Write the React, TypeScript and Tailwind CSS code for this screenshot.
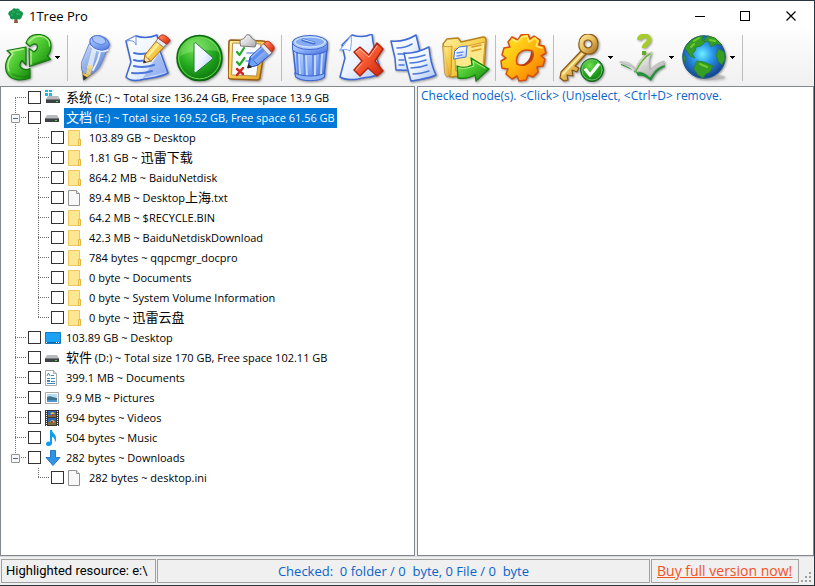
import React, { useState } from "react";

type NodeIcon = "system" | "drive" | "folder" | "file" | "desktop" | "documents" | "pictures" | "videos" | "music" | "downloads";

interface TreeNode {
  id: string;
  icon: NodeIcon;
  name: string;
  children?: TreeNode[];
}

const nodes: TreeNode[] = [
  { id: "c", icon: "system", name: "系统 (C:) ~ Total size 136.24 GB, Free space 13.9 GB" },
  {
    id: "e",
    icon: "drive",
    name: "文档 (E:) ~ Total size 169.52 GB, Free space 61.56 GB",
    children: [
      { id: "e1", icon: "folder", name: "103.89 GB ~ Desktop" },
      { id: "e2", icon: "folder", name: "1.81 GB ~ 迅雷下载" },
      { id: "e3", icon: "folder", name: "864.2 MB ~ BaiduNetdisk" },
      { id: "e4", icon: "file", name: "89.4 MB ~ Desktop上海.txt" },
      { id: "e5", icon: "folder", name: "64.2 MB ~ $RECYCLE.BIN" },
      { id: "e6", icon: "folder", name: "42.3 MB ~ BaiduNetdiskDownload" },
      { id: "e7", icon: "folder", name: "784 bytes ~ qqpcmgr_docpro" },
      { id: "e8", icon: "folder", name: "0 byte ~ Documents" },
      { id: "e9", icon: "folder", name: "0 byte ~ System Volume Information" },
      { id: "e10", icon: "folder", name: "0 byte ~ 迅雷云盘" },
    ],
  },
  { id: "desktop", icon: "desktop", name: "103.89 GB ~ Desktop" },
  { id: "d", icon: "drive", name: "软件 (D:) ~ Total size 170 GB, Free space 102.11 GB" },
  { id: "documents", icon: "documents", name: "399.1 MB ~ Documents" },
  { id: "pictures", icon: "pictures", name: "9.9 MB ~ Pictures" },
  { id: "videos", icon: "videos", name: "694 bytes ~ Videos" },
  { id: "music", icon: "music", name: "504 bytes ~ Music" },
  {
    id: "downloads",
    icon: "downloads",
    name: "282 bytes ~ Downloads",
    children: [{ id: "dl1", icon: "file", name: "282 bytes ~ desktop.ini" }],
  },
];

function Gradients() {
  const stops: [string, string, string, string][] = [
    ["green", "#8eea62", "#46c32c", "#14830f"],
    ["blue", "#d5e5ff", "#88aef5", "#4468dc"],
    ["paper", "#ffffff", "#edf4ff", "#a9c3f8"],
    ["gold", "#fff3a0", "#f8cf4e", "#e29a18"],
    ["red", "#ff9a78", "#f4552d", "#c8230b"],
    ["gear", "#fff22c", "#ffb60c", "#f56a00"],
    ["key", "#ffefad", "#e8bd57", "#9b6420"],
    ["silver", "#ffffff", "#dadada", "#a6a6a6"],
  ];
  return (
    <svg className="absolute h-0 w-0" aria-hidden="true">
      <defs>
        {stops.map(([id, a, b, c]) => (
          <linearGradient key={id} id={id} x1="0" y1="0" x2="1" y2="1">
            <stop offset="0" stopColor={a} />
            <stop offset=".5" stopColor={b} />
            <stop offset="1" stopColor={c} />
          </linearGradient>
        ))}
        <radialGradient id="ball" cx=".4" cy=".3" r=".75">
          <stop offset="0" stopColor="#6fdf50" />
          <stop offset=".55" stopColor="#22a81d" />
          <stop offset="1" stopColor="#0a700c" />
        </radialGradient>
        <radialGradient id="sea" cx=".46" cy=".43" r=".58">
          <stop offset="0" stopColor="#6df0ff" />
          <stop offset=".4" stopColor="#2b9aec" />
          <stop offset="1" stopColor="#123f8c" />
        </radialGradient>
      </defs>
    </svg>
  );
}

function Glyph({ children }: { children: React.ReactNode }) {
  return (
    <svg
      viewBox="0 0 48 48"
      className="h-12 w-12 drop-shadow-[1px_1px_1px_rgba(0,0,0,0.4)]"
      strokeLinejoin="round"
      strokeLinecap="round"
      fill="none"
      aria-hidden="true"
    >
      {children}
    </svg>
  );
}

const RefreshGlyph = () => (
  <Glyph>
    <g fill="url(#green)" stroke="#15780f" strokeWidth="1.2">
      <path d="M21 13 2 16.500 6 20C1 25-1 33 2 39c4 8 15 8 23 5V34.500c-4 2-7 1-9-1-2-2.500-1-5 1-7L21 31z" />
      <path d="M21 9C23 3 28 .5 33 .5 41 .5 46 5 46 12c0 4-1 7-3.500 10l3 3.500L24.500 32.500 24 14.500l5 3.500c3-2 4-5 3-7-2-2-5-1-7 1.500z" />
    </g>
    <g stroke="#c6f8a4" strokeWidth="1.300" opacity=".85">
      <path d="M18.500 15 5.500 17.500 8 20C3 26 2 32 4 37" />
      <path d="M24 8C28 3 33 1.500 37 2.500c5 1.500 8 4.500 7.500 9.500M26 17.500V30" />
    </g>
    <path d="M7 40c5 3 11 3.500 17 2M28 30l13-4" stroke="#0c6c0c" strokeWidth="1.500" opacity=".4" />
  </Glyph>
);

const PencilGlyph = () => (
  <Glyph>
    <path d="m10 33 1.500 13L21 39z" fill="#f6c84b" stroke="#7d7460" />
    <path d="m11 41 .5 5.500 4-3z" fill="#333" />
    <path d="M9.500 28.500 17 10h18.500c0 6-3.500 14-6.500 20-2 4.500-5 8-9 9.500-6 2-10-1-10.500-5z" fill="url(#blue)" stroke="#5c80d6" opacity=".85" />
    <path d="m20 15 5-1-5 21-5-1z" fill="#fff" opacity=".65" />
    <path d="m16 31 5 1-3 9-4-1z" fill="#ffd768" opacity=".8" />
    <path d="M28 15c0 7-3 14-7 21" stroke="#eef4ff" strokeWidth="1.800" />
    <ellipse cx="27.500" cy="9" rx="10" ry="7" transform="rotate(20 27.500 9)" fill="url(#blue)" stroke="#4a70d0" />
    <ellipse cx="27" cy="6" rx="7" ry="4" transform="rotate(18 27 6)" fill="#aac6fa" stroke="#5f86df" />
    <path d="M18 12c5 5 12 7 18 4" stroke="#e3edff" strokeWidth="1.500" />
  </Glyph>
);

const EditGlyph = () => (
  <Glyph>
    <path d="M2 7 12 2c6 2 14 2 21-1l3 16 8 22c-9 5-19 5-28 7-6 1-11 0-14-3l5-15z" fill="url(#paper)" stroke="#3e68d6" strokeWidth="1.500" />
    <path d="M2 7c6-1 9 0 10 4L12 2z" fill="#fff" stroke="#6c91e6" />
    <path d="m19 44 24-6-8-19z" fill="#7193e8" opacity=".5" />
    <path d="M10 19c7 2 12 1 17-1M10 26c6 2 10 1 15-1M10 32c8 2 14 1 20-1M8 39c8 1 14 0 20-2" stroke="#4b75d8" strokeWidth="2" />
    <path d="m21 21-1.500 8L27 27z" fill="#ffe4ae" stroke="#935d15" />
    <path d="m20 26-.5 3 3-.8z" fill="#222" />
    <path d="m21 21 12-15 8 6-14 15z" fill="url(#gold)" stroke="#b46a10" />
    <path d="m23.500 22.500 12-14" stroke="#fff1a2" strokeWidth="2" />
    <path d="m32 7 2.500-3 8 6-2.500 3z" fill="#e7e7ee" stroke="#888" />
    <path d="M34.500 4C37 0 39 0 43 3s4 4 0 7z" fill="url(#red)" stroke="#b52a18" />
  </Glyph>
);

const PlayGlyph = () => (
  <Glyph>
    <circle cx="23.500" cy="24" r="22.500" fill="url(#ball)" stroke="#0b680d" strokeWidth="1.500" />
    <circle cx="23.500" cy="24" r="20.800" stroke="#6edb55" strokeWidth="1" />
    <path d="M4 22C5 8 18 2 28 4c9 1 14 8 15 14-10-3-24-3-39 4z" fill="#b8ffa0" opacity=".3" />
    <path d="M18 10c0-1.500 1.500-1.500 2.500-.5L36 23c1 1 1 1.500 0 2.500L20.500 38c-1 1-2.500.5-2.500-1z" fill="url(#paper)" stroke="#1c7c36" />
  </Glyph>
);

const ChecklistGlyph = () => (
  <Glyph>
    <path d="M3 6 35 7c2 0 3 1 2.500 3L32 43c0 2-1 3-3 3L3 45c-2 0-3-1-3-3L1 8c0-1 1-2 2-2z" fill="url(#gold)" stroke="#9a5c17" strokeWidth="1.500" />
    <path d="m5 9 28 1-4.500 32L4 41z" fill="#fafcff" stroke="#b79055" />
    <path d="M12 8c0-4 4-2 5-5s5-3 6 0 6 2 5 7l-1 3-14-1z" fill="url(#silver)" stroke="#777" />
    <path d="m9 18 2.500 3L16 14M9 28l2.500 3 5-7" stroke="#28a929" strokeWidth="2.200" />
    <path d="m9 35 6 5m0-6-6 7" stroke="#c92b20" strokeWidth="2.500" />
    <path d="M19 19h9M18 27h5" stroke="#779fea" strokeWidth="1.500" />
    <path d="m20 33 2-10 14-13 8 9-14 12z" fill="url(#blue)" stroke="#2754c7" />
    <path d="m23 24 7 7-9 2.500z" fill="#70a2fc" stroke="#3462c3" />
    <path d="m20.500 31-.8 3 3.500-1z" fill="#222" stroke="#222" />
    <path d="m25 25 12-11" stroke="#5b8df0" strokeWidth="3.500" />
    <path d="m33 12 3-2.500 8 9-3 2.500z" fill="#e7e7ee" stroke="#999" />
    <path d="m36 9.500 2-1.800c2-1 3-.5 5.500 2s3.500 4.300 2 6.300L44 18z" fill="url(#red)" stroke="#b52a18" />
  </Glyph>
);

const TrashGlyph = () => (
  <Glyph>
    <path d="M7 14h34l-3 29c-5 4-23 4-28 0z" fill="url(#blue)" stroke="#3c62cc" strokeWidth="1.500" />
    <path d="m12 19 1 22M19 21l1 23M28 21v23M35 19l-1 22" stroke="#5f88e8" strokeWidth="4" />
    <path d="m13 20 1 20M20 22l1 21M29 22v21M36 20l-1 20" stroke="#c3daff" strokeWidth="2" />
    <path d="M9 39c6 4 24 4 30 0l-.7 4c-5 5-23 5-28.500 0z" fill="#8fb3f8" stroke="#3c62cc" />
    <path d="M6.500 8v8c5 6 30 6 35 0V8z" fill="url(#blue)" stroke="#4068d0" />
    <ellipse cx="24" cy="8.500" rx="17.500" ry="7" fill="#a8c7fb" stroke="#4068d0" />
    <ellipse cx="24" cy="8" rx="15" ry="5" fill="#86acf4" stroke="#dceaff" />
    <path d="m17 6 11 3" stroke="#426fd3" strokeWidth="3" />
    <path d="m17 5.500 11 3" stroke="#c9ddff" strokeWidth="1" />
  </Glyph>
);

const DeleteGlyph = () => (
  <Glyph>
    <path d="M4 11 14 1c6 2 14 2 20-1 1 12 4 23 8 34 1 3 1 5-1 6-7 4-14 3-21 5-7 1-13 1-18-2l5-19z" fill="url(#paper)" stroke="#3f6ad4" strokeWidth="1.500" />
    <path d="M2 16 13 2c1 5 0 10-1 15-3-2-6-2-10-1z" fill="#fff" stroke="#7ea3eb" />
    <path d="m16 18 6-5 9 8 8-12 6 6-8 12 8 10-6 5-9-8-8 8-6-6 8-9z" fill="url(#red)" stroke="#b4260f" strokeWidth="1.500" />
    <path d="m18 18 4-3 9 8 8-11M18 36l6-7" stroke="#ffb59c" strokeWidth="1" />
  </Glyph>
);

const CopyGlyph = () => (
  <Glyph>
    <path d="M1 7c9 1 17-1 25-6l7 29c-7 5-14 7-22 6H6L5 24z" fill="url(#paper)" stroke="#3f6ad4" strokeWidth="1.500" />
    <path d="M7 14c6 0 10-1 15-4M8 20h6M9 26h5M9 31h5" stroke="#4c78d8" strokeWidth="1.500" />
    <path d="M14 19c9 1 17-2 25-6 1 12 3 20 7 28-8 4-15 4-25 6-2-7-5-18-7-28z" fill="url(#paper)" stroke="#3f6ad4" strokeWidth="1.500" />
    <path d="M19 24c6 0 10-1 16-3M20 29c6 0 10-1 16-3M21 34c6 0 11-1 16-3M23 40c6 0 10-1 16-3" stroke="#4c78d8" strokeWidth="1.500" />
  </Glyph>
);

const MoveGlyph = () => (
  <Glyph>
    <path d="m1 10 4-5 11-1 3 4 22-5c2 0 3 1 3 3l-2 32-32 5c-2 0-3-1-3-3z" fill="url(#gold)" stroke="#b9831c" strokeWidth="1.300" />
    <path d="m13 15 30-7-2 24-27 5z" fill="#ffe88a" stroke="#d59c2c" />
    <path d="m13 17 4-4 8-1-1 11-12 2z" fill="url(#paper)" stroke="#4773d8" />
    <path d="m15 19 6-1m-6 4 5-1" stroke="#6593ee" strokeWidth="1.500" />
    <path d="m30 13 9-2m-9 6 9-2" stroke="#dd9a26" strokeWidth="1.500" />
    <path d="M1 12c3 1 6 1 9 0l-1 29-4 2-2-3z" fill="url(#gold)" stroke="#c1862a" opacity=".8" />
    <path d="M15 32c5 2 10 2 15-1l-1-7 18 11-13 12-1-6c-5 3-11 4-17 3z" fill="url(#green)" stroke="#16800f" strokeWidth="1.300" />
    <path d="M17 34c5 1 10 0 15-2l-1-5 12 7" stroke="#a9ef84" />
  </Glyph>
);

const SettingsGlyph = () => (
  <Glyph>
    <path
      fillRule="evenodd"
      d="m12 3 6 3 3-5 7-1 2 5 4-3 6 4-1 5 5 1 2 7-5 3 4 3-2 7-6 1 1 5-5 5-5-2-2 5-7 1-2-5-5 3-6-5 2-5-6-1-1-7 5-3-4-3 2-7 6-1-2-5zM27 16c-8 0-12 7-10 14 8 4 18-3 16-12-1-2-3-2-6-2z"
      fill="url(#gear)"
      stroke="#d84e06"
      strokeWidth="1.500"
    />
    <path d="M20 31c7-1 11-7 11-14 5 3 0 14-8 15-1 0-2 0-3-1z" fill="#bd3913" />
    <path d="m12 5 5 3 5-5 5-1 2 6 6-4 3 3-2 5 6 2" stroke="#fff58a" strokeWidth="1.500" opacity=".8" />
  </Glyph>
);

const KeyGlyph = () => (
  <Glyph>
    <path d="M24 16 3 38l-1 6 4 3 4-1-1-5 6 1-1-6 5 2 2-4-4-2 12-13z" fill="url(#key)" stroke="#85561b" strokeWidth="1.200" />
    <path d="M5 40 25 19" stroke="#fff0a6" strokeWidth="1.800" />
    <path fillRule="evenodd" d="M30 0c6 0 10 4 10 10 0 7-5 11-10 10-6 0-10-5-9-11 0-5 4-9 9-9zm0 6c-3 0-4 2-4 4s2 4 4 4 4-2 4-4-2-4-4-4z" fill="url(#key)" stroke="#8a5a1b" strokeWidth="1.200" />
    <circle cx="34" cy="36" r="11.500" fill="url(#ball)" stroke="#1f642b" />
    <circle cx="34" cy="36" r="10" stroke="#71bd72" />
    <path d="m28 36 4 5 8-10" stroke="#fff" strokeWidth="3.200" strokeLinecap="square" strokeLinejoin="miter" />
  </Glyph>
);

const HelpGlyph = () => (
  <Glyph>
    <path d="M2 30c6 2 12 5 14 9 3-9 7-15 15-18l1 1c-4 4-3 11-1 17 4-5 8-8 14-9l1 3c-6 2-10 6-14 14-6-5-9-6-13-5l-2-4c-5-3-10-5-15-7z" fill="#249139" />
    <path d="M1 28c8-1 13 3 15 9 3-10 8-16 17-19-4 7-3 13-2 18 4-5 8-7 14-9v4c-7 2-10 6-14 12-5-4-8-6-13-5l-3-5c-4-2-9-4-14-5z" fill="url(#silver)" stroke="#b5b5b5" strokeWidth=".7" />
    <path d="M17 37C21 29 25 23 31 20" stroke="#69b52d" strokeWidth="1.500" />
    <path d="M20 6c1-5 9-6 10-1 1 5-5 4-5 9" stroke="#a6cc28" strokeWidth="4.500" strokeLinecap="butt" />
    <path d="M23 17h4v4h-4z" fill="#65ad20" />
  </Glyph>
);

const GlobeGlyph = () => (
  <Glyph>
    <ellipse cx="30" cy="43" rx="15" ry="3" fill="#aaa" opacity=".5" />
    <circle cx="24" cy="23" r="21.300" fill="url(#sea)" stroke="#255d92" />
    <g fill="#379e25" stroke="#267b27" strokeWidth=".7">
      <path d="M5 14C9 6 17 2 23 2l-1 4 3 2-4 4-5 1-1 4-3 3 3 4-5-2-3-5z" />
      <path d="m28 2 7 2 7 7-6-1-5 3-2-5-5-1z" />
      <path d="m39 15 5 3 1 7-3 6-4-4-2-6z" />
      <path d="m17 27 7 1 9 4-3 6-4 2-3 4-5-3-4-6z" />
      <path d="m3 21 3 3-1 5z" />
    </g>
    <path d="m14 7 5-3m-8 9 3-3m16-4 5 1m-15 23 7 3" stroke="#83d832" strokeWidth="2" opacity=".75" />
  </Glyph>
);

function ToolButton({ label, menu, children }: { label: string; menu?: boolean; children: React.ReactNode }) {
  return (
    <div className="flex shrink-0 items-center">
      <button type="button" aria-label={label} title={label} className="px-0.5 hover:bg-[#d8e6f2]">
        {children}
      </button>
      {menu && (
        <button type="button" aria-label={`${label} options`} className="flex h-12 w-[9px] items-center hover:bg-[#d8e6f2]">
          <svg viewBox="0 0 5 3" className="h-[3px] w-[5px]" shapeRendering="crispEdges" aria-hidden="true">
            <path d="M0 0h5v1H4v1H3v1H2V2H1V1H0z" />
          </svg>
        </button>
      )}
    </div>
  );
}

const Separator = () => (
  <div className="flex h-[46px] w-1.5 shrink-0 justify-center">
    <div className="w-px bg-[#bdbdbd]" />
  </div>
);

function FileIcon({ icon }: { icon: NodeIcon }) {
  return (
    <svg viewBox="0 0 16 16" className="h-4 w-4 shrink-0" aria-hidden="true">
      {icon === "system" && <path d="M0 0h3v2H0zM4 0h3v2H4zM0 3h3v3H0zM4 3h3v3H4z" fill="#19b9ed" />}
      {(icon === "system" || icon === "drive") && (
        <g transform={icon === "system" ? "translate(0 1)" : "translate(-1 0)"}>
          <path d="M3 5h10l2 3H1z" fill="#b8bbbd" />
          <path d="M1 8h14v4H1z" fill="#3d4144" />
          <path d="M1 8h14v1H1z" fill="#777b7e" />
          <path d="M11 10h2v1h-2z" fill="#40dd55" />
        </g>
      )}
      {icon === "folder" && (
        <>
          <path d="M.5.5h11v9h1v6H.5z" fill="#ffe693" stroke="#eec858" />
          <path d="M10.500 9.500h2v6h-2z" fill="#ffe693" stroke="#e3b744" />
        </>
      )}
      {icon === "file" && (
        <>
          <path d="M.5.5h8l3 3v12H.5z" fill="#f8f8f8" stroke="#929292" />
          <path d="M8.500.5v3h3" fill="#e4e4e4" stroke="#929292" />
        </>
      )}
      {icon === "desktop" && (
        <>
          <path d="M.5 2.500h15v11H.5z" fill="#1ca1f4" stroke="#147bc2" />
          <path d="M1 12h14v1H1z" fill="#0767a7" />
          <path d="M1 12h1v1H1zM11 12h1v1h-1zM13 12h1v1h-1z" fill="#fff" />
        </>
      )}
      {icon === "documents" && (
        <>
          <path d="M.5.5h8l3 3v12H.5z" fill="#fff" stroke="#aaa" />
          <path d="M8.500.5v3h3" fill="#ddd" stroke="#aaa" />
          <path d="m2 6 1.500-3L5 6M6 5.500h3M6 8.500h4M2 13.500h8M6 11.500h4" fill="none" stroke="#3c89bd" />
          <path d="M2 8h3v1H2zM2 10h3v2H2z" fill="#3c89bd" />
        </>
      )}
      {icon === "pictures" && (
        <>
          <path d="M.5 2.500h13v11H.5z" fill="#fff" stroke="#a8a8a8" />
          <path d="M2 4h10v4H2z" fill="#b5dbf7" />
          <path d="M2 7c3-2 5 0 10 1v2H2z" fill="#3d7089" />
          <path d="M2 10h10v2H2z" fill="#4a94cb" />
        </>
      )}
      {icon === "videos" && (
        <>
          <path d="M0 0h14v16H0z" fill="#353535" />
          <path d="M3 1h8v6H3zM3 8h8v7H3z" fill="#2867ba" />
          <path d="M3 5h8v2H3zM3 12h8v3H3z" fill="#7d6d3d" />
          <path d="m5 3 3-1 2 2-3 1zM5 11l3-1 2 2-3 1z" fill="#e5bd3f" />
          <path d="M7 4h2v2H7zM6 11h2v2H6z" fill="#cf3727" />
          <path d="M1.500 1v15M12.500 1v15" fill="none" stroke="#fff" strokeDasharray="1 1" />
        </>
      )}
      {icon === "music" && (
        <path d="M5 0h2c0 3 4 4 4 8 0 2 0 3-1 4 0-3-1-5-3-5v6c0 4-6 4-6 1 0-2 2-3 4-2z" fill="#129ce9" />
      )}
      {icon === "downloads" && <path d="M5.500.5h5v7h4.500L8 15.500 1 7.500h4.500z" fill="#3292e5" stroke="#247bc9" />}
    </svg>
  );
}

// One 23px wide cell of the dotted connector lines left of a node
function Guide({ up, down, across, children }: { up?: boolean; down?: boolean; across?: boolean; children?: React.ReactNode }) {
  return (
    <div className="grid h-5 w-[23px] shrink-0">
      <svg viewBox="0 0 23 20" className="col-start-1 row-start-1 h-5 w-[23px]" shapeRendering="crispEdges" stroke="#707070" strokeDasharray="1 1" aria-hidden="true">
        {up && <path d="M11.500 0v10" />}
        {down && <path d="M11.500 10v10" />}
        {across && <path d="M11 9.500h12" />}
      </svg>
      {children}
    </div>
  );
}

// Chinese runs are set larger than the Latin text around them
function NodeName({ name }: { name: string }) {
  return name.split(/([\u4e00-\u9fff]+)/).map((part, i) =>
    i % 2 ? (
      <span key={i} className="text-[13px] leading-none">{part}</span>
    ) : (
      part
    )
  );
}

interface RowProps {
  node: TreeNode;
  level: number;
  first: boolean;
  last: boolean;
  parentContinues?: boolean;
  open: boolean;
  selected: boolean;
  onToggle: () => void;
  onSelect: () => void;
}

function Row({ node, level, first, last, parentContinues, open, selected, onToggle, onSelect }: RowProps) {
  return (
    <div className="flex h-5 items-start whitespace-nowrap">
      {level > 0 && <Guide up={parentContinues} down={parentContinues} />}
      <Guide up={!first} down={!last} across>
        {node.children && (
          <button
            type="button"
            onClick={onToggle}
            aria-label={open ? "Collapse" : "Expand"}
            className="col-start-1 row-start-1 ml-[7px] mt-1.5 flex h-[9px] w-[9px] items-center justify-center rounded-[1px] border border-[#919191] bg-[#f8f8f8]"
          >
            <span className="h-px w-[5px] bg-[#4b63a7]" />
          </button>
        )}
      </Guide>
      <input
        type="checkbox"
        id={`check-${node.id}`}
        aria-labelledby={`name-${node.id}`}
        className="ml-px mt-[3px] h-[13px] w-[13px] shrink-0 appearance-none border border-[#333] bg-white checked:bg-[#0078d7]"
      />
      <span className="ml-1 mr-[3px] mt-0.5">
        <FileIcon icon={node.icon} />
      </span>
      <button
        type="button"
        id={`name-${node.id}`}
        onClick={onSelect}
        className={`h-5 px-0.5 text-left leading-5 ${selected ? "bg-[#0078d7] text-white" : "text-black"}`}
      >
        <NodeName name={node.name} />
      </button>
    </div>
  );
}

function Tree() {
  const [selected, setSelected] = useState("e");
  const [closed, setClosed] = useState<string[]>([]);

  const toggle = (id: string) => {
    setClosed(closed.includes(id) ? closed.filter((c) => c !== id) : [...closed, id]);
  };

  return (
    <div className="w-[415px] shrink-0 overflow-auto border border-[#828790] bg-white pl-[3px] pt-px text-[11px]">
      {nodes.map((node, i) => {
        const last = i === nodes.length - 1;
        const open = !closed.includes(node.id);
        return (
          <React.Fragment key={node.id}>
            <Row
              node={node}
              level={0}
              first={i === 0}
              last={last}
              open={open}
              selected={selected === node.id}
              onToggle={() => toggle(node.id)}
              onSelect={() => setSelected(node.id)}
            />
            {open &&
              node.children?.map((child, j) => (
                <Row
                  key={child.id}
                  node={child}
                  level={1}
                  first={false}
                  last={j === node.children!.length - 1}
                  parentContinues={!last}
                  open={false}
                  selected={selected === child.id}
                  onToggle={() => toggle(child.id)}
                  onSelect={() => setSelected(child.id)}
                />
              ))}
          </React.Fragment>
        );
      })}
    </div>
  );
}

function TitleBar() {
  return (
    <header className="flex h-[30px] shrink-0 items-center bg-white pl-2">
      <svg viewBox="0 0 16 16" className="h-4 w-4" aria-hidden="true">
        <path d="m7 8-1 7h4L9 8z" fill="#8d5a38" />
        <path d="M4 2c1-2 3-2 4-1 2-1 4 0 4 2 3 0 4 3 2 5 0 3-3 4-4 3-1 1-3 1-4 0-2 1-5 0-4-3C-1 7 0 3 4 2z" fill="#14934c" />
        <path d="M4 4h3M9 3h2M3 7h2M8 6h4" stroke="#39bd67" />
      </svg>
      <h1 className="ml-[5px] flex-1 text-[13px] leading-5">1Tree Pro</h1>
      <button type="button" aria-label="Minimize" className="flex h-full w-[45px] items-center justify-center hover:bg-[#e5e5e5]">
        <svg viewBox="0 0 11 11" className="h-[11px] w-[11px]" shapeRendering="crispEdges" stroke="#000"><path d="M0 5.500h10" /></svg>
      </button>
      <button type="button" aria-label="Maximize" className="flex h-full w-[45px] items-center justify-center hover:bg-[#e5e5e5]">
        <svg viewBox="0 0 11 11" className="h-[11px] w-[11px]" shapeRendering="crispEdges" stroke="#000" fill="none"><path d="M.5.5h9v9h-9z" /></svg>
      </button>
      <button type="button" aria-label="Close" className="flex h-full w-[46px] items-center justify-center hover:bg-[#e81123]">
        <svg viewBox="0 0 11 11" className="h-[11px] w-[11px]" stroke="#000" strokeWidth="1.200"><path d="m.5.5 9 9m0-9-9 9" /></svg>
      </button>
    </header>
  );
}

function Toolbar() {
  return (
    <div role="toolbar" className="flex h-[55px] shrink-0 items-center bg-linear-to-b from-[#fdfdfd] to-[#f0f0f0] pb-0.5 pl-[3px]">
      <ToolButton label="Refresh" menu><RefreshGlyph /></ToolButton>
      <Separator />
      <ToolButton label="Highlight"><PencilGlyph /></ToolButton>
      <ToolButton label="Edit"><EditGlyph /></ToolButton>
      <ToolButton label="Run"><PlayGlyph /></ToolButton>
      <ToolButton label="Properties"><ChecklistGlyph /></ToolButton>
      <Separator />
      <ToolButton label="Recycle"><TrashGlyph /></ToolButton>
      <ToolButton label="Delete"><DeleteGlyph /></ToolButton>
      <ToolButton label="Copy"><CopyGlyph /></ToolButton>
      <ToolButton label="Move"><MoveGlyph /></ToolButton>
      <Separator />
      <ToolButton label="Settings"><SettingsGlyph /></ToolButton>
      <Separator />
      <ToolButton label="Register" menu><KeyGlyph /></ToolButton>
      <ToolButton label="Help" menu><HelpGlyph /></ToolButton>
      <ToolButton label="Website" menu><GlobeGlyph /></ToolButton>
      <Separator />
    </div>
  );
}

function StatusBar() {
  return (
    <footer className="flex h-[29px] shrink-0 items-start gap-px border-t border-[#d9d9d9] bg-[#f0f0f0] pl-px pt-0.5 text-[13px]">
      <div className="h-6 w-[155px] border border-[#a0a0a0] px-1 font-['Roboto',sans-serif] leading-[22px] whitespace-nowrap">
        Highlighted resource: e:\
      </div>
      <div className="h-6 flex-1 border border-[#a0a0a0] text-center leading-[22px] whitespace-pre text-[#0a64c8]">
        {"Checked:  0 folder / 0  byte, 0 File / 0  byte"}
      </div>
      <div className="h-6 w-[148px] border border-[#a0a0a0] px-[5px] leading-[22px] whitespace-nowrap">
        <a href="#buy" className="text-[14px] text-[#f4511e] underline">Buy full version now!</a>
      </div>
      <svg viewBox="0 0 11 11" className="mr-[3px] mb-[3px] h-[11px] w-[11px] self-end" fill="#a0a0a0" aria-hidden="true">
        <path d="M9 1h2v2H9zM5 5h2v2H5zM9 5h2v2H9zM1 9h2v2H1zM5 9h2v2H5zM9 9h2v2H9z" />
      </svg>
    </footer>
  );
}

export default function App() {
  return (
    <div className="flex min-h-screen flex-col border-t border-r border-b border-[#28343e] bg-[#f0f0f0] font-['Open_Sans','Noto_Sans_CJK_SC',sans-serif] text-black">
      <Gradients />
      <TitleBar />
      <Toolbar />
      <main className="flex flex-1 gap-0.5">
        <Tree />
        <section className="flex-1 border border-[#828790] bg-white px-[3px] text-[12px] leading-[18px] text-[#0a64c8]">
          Checked node(s). &lt;Click&gt; (Un)select, &lt;Ctrl+D&gt; remove.
        </section>
      </main>
      <StatusBar />
    </div>
  );
}
